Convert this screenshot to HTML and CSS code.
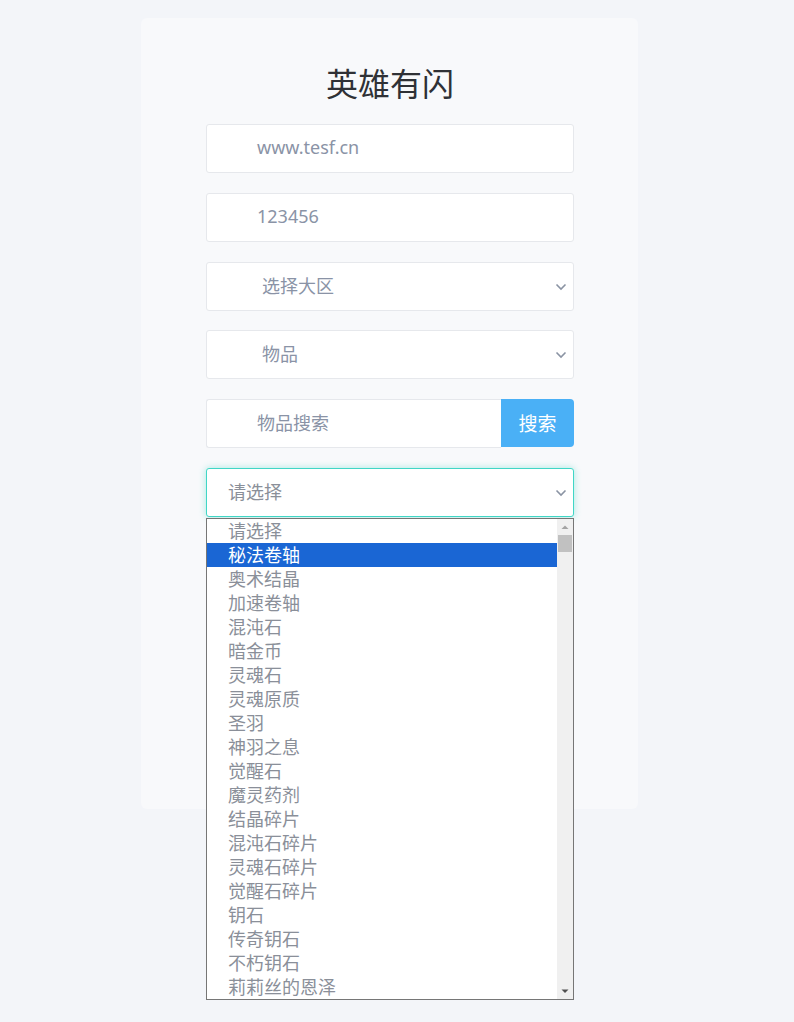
FILE: index.html
```html
<!DOCTYPE html>
<html lang="zh-CN">
<head>
<meta charset="utf-8">
<title>英雄有闪</title>
<link rel="stylesheet" href="styles.css">
</head>
<body>
<div class="card">
  <h1 class="title">英雄有闪</h1>
  <div class="form">
    <div class="field"><span class="text">www.tesf.cn</span></div>
    <div class="field"><span class="text">123456</span></div>
    <div class="field select tight"><span class="text sel-text">选择大区</span><svg class="chev" viewBox="0 0 12 8" width="12" height="8"><path d="M1.5 1.5 L6 6 L10.5 1.5" fill="none" stroke="#8a93a3" stroke-width="1.6"/></svg></div>
    <div class="field select"><span class="text sel-text">物品</span><svg class="chev" viewBox="0 0 12 8" width="12" height="8"><path d="M1.5 1.5 L6 6 L10.5 1.5" fill="none" stroke="#8a93a3" stroke-width="1.6"/></svg></div>
    <div class="search-row">
      <div class="field search-input"><span class="text">物品搜索</span></div>
      <button class="btn">搜索</button>
    </div>
    <div class="dropdown-wrap">
      <div class="field select focused"><span class="text choose">请选择</span><svg class="chev" viewBox="0 0 12 8" width="12" height="8"><path d="M1.5 1.5 L6 6 L10.5 1.5" fill="none" stroke="#8a93a3" stroke-width="1.6"/></svg></div>
      <div class="listbox">
        <ul class="options">
          <li>请选择</li>
          <li class="active">秘法卷轴</li>
          <li>奥术结晶</li>
          <li>加速卷轴</li>
          <li>混沌石</li>
          <li>暗金币</li>
          <li>灵魂石</li>
          <li>灵魂原质</li>
          <li>圣羽</li>
          <li>神羽之息</li>
          <li>觉醒石</li>
          <li>魔灵药剂</li>
          <li>结晶碎片</li>
          <li>混沌石碎片</li>
          <li>灵魂石碎片</li>
          <li>觉醒石碎片</li>
          <li>钥石</li>
          <li>传奇钥石</li>
          <li>不朽钥石</li>
          <li>莉莉丝的恩泽</li>
        </ul>
        <div class="scrollbar">
          <svg class="arrow" viewBox="0 0 16 16" width="16" height="16"><path d="M4.5 10 L8 6.5 L11.5 10 Z" fill="#a3a3a3"/></svg>
          <div class="track"><div class="thumb"></div></div>
          <svg class="arrow" viewBox="0 0 16 16" width="16" height="16"><path d="M4.5 6.5 L8 10 L11.5 6.5 Z" fill="#505050"/></svg>
        </div>
      </div>
    </div>
  </div>
</div>
</body>
</html>
```

FILE: styles.css
```css
* { box-sizing: border-box; }
html, body { margin: 0; padding: 0; }
body {
  background: #f3f5f9;
  font-family: "Noto Sans", "Noto Sans CJK SC", sans-serif;
  width: 794px;
  height: 1022px;
  overflow: hidden;
}
.card {
  margin: 18px 0 0 141px;
  width: 497px;
  height: 791px;
  background: #f8f9fb;
  border-radius: 6px;
  padding: 44px 64px 0 65px;
}
.title {
  margin: 0 0 22px;
  height: 40px;
  line-height: 40px;
  font-size: 32px;
  font-weight: 400;
  text-align: center;
  color: #2f3136;
  font-family: "Noto Sans CJK SC", sans-serif;
}
.form {
  display: flex;
  flex-direction: column;
  gap: 20px;
}
.field {
  height: 49px;
  background: #fff;
  border: 1px solid #e6e8ec;
  border-radius: 3px;
  display: flex;
  align-items: center;
  padding-left: 50px;
  padding-bottom: 3px;
  position: relative;
}
.tight { margin-bottom: -1px; }
.text {
  font-size: 18px;
  color: #8a93a6;
  font-family: "Noto Sans", "Noto Sans CJK SC", sans-serif;
}
.sel-text { margin-left: 5px; }
.chev {
  position: absolute;
  right: 6px;
  top: 20px;
}
.search-row {
  display: flex;
  height: 49px;
}
.search-input {
  flex: 1;
  border-radius: 3px 0 0 3px;
  border-right: none;
}
.btn {
  width: 73px;
  height: 48px;
  border: none;
  background: #4ab0f6;
  color: #fff;
  font-size: 19px;
  font-family: "Noto Sans CJK SC", sans-serif;
  border-radius: 0 4px 4px 0;
  padding: 0 0 2px;
}
.dropdown-wrap { position: relative; }
.focused {
  border-color: #40d6c6;
  box-shadow: 0 0 7px rgba(64, 214, 198, 0.45);
  padding-left: 21px;
}
.choose { color: #8a8f99; font-family: "Noto Sans CJK SC", sans-serif; }
.listbox {
  position: absolute;
  top: 50px;
  left: 0;
  width: 368px;
  height: 482px;
  background: #fff;
  border: 1px solid #767676;
  display: flex;
  z-index: 5;
}
.options {
  list-style: none;
  margin: 0;
  padding: 0;
  flex: 1;
}
.options li {
  height: 24px;
  line-height: 22px;
  padding-left: 21px;
  font-size: 18px;
  color: #8a8f99;
  font-family: "Noto Sans CJK SC", sans-serif;
}
.options li.active {
  background: #1a66d4;
  color: #fff;
}
.scrollbar {
  width: 16px;
  background: #f0f0f0;
  display: flex;
  flex-direction: column;
}
.arrow { display: block; flex: none; }
.track { flex: 1; padding: 0 1px; }
.thumb {
  height: 17px;
  background: #c1c1c1;
}
```
